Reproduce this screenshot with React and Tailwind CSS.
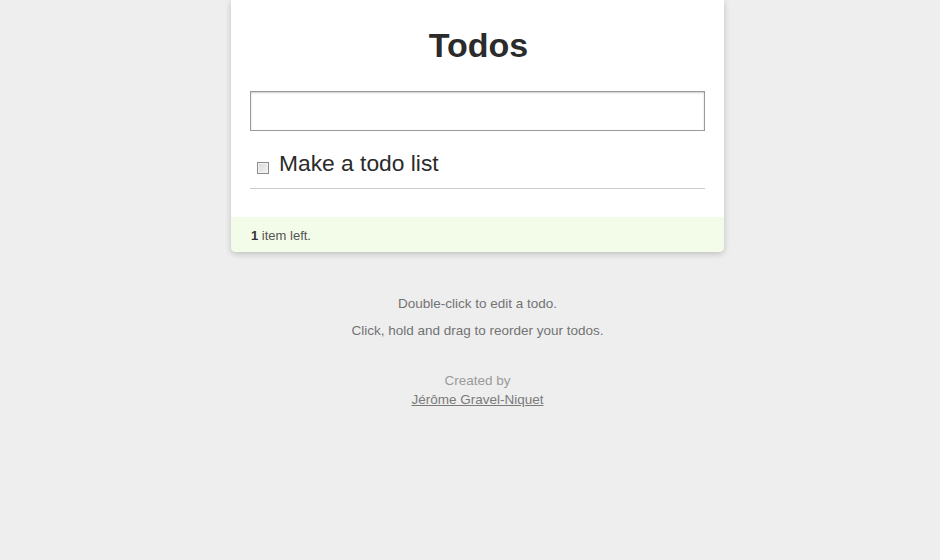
export default function App() {
  return (
    <div
      className="min-h-[560px] w-full bg-[#eeeeee] pl-[15px] text-[#333333]"
      style={{ fontFamily: '"Liberation Sans", Arial, sans-serif' }}
    >
      <div className="mx-auto w-[493px]">
        <div className="rounded-b-[5px] bg-white px-[19px] shadow-[0_2px_6px_0_rgba(0,0,0,0.2)]">
          <h1 className="pl-[2px] pt-[28px] text-center text-[34px] font-bold leading-[34px] text-[#2b2b2b]">
            Todos
          </h1>
          <input
            type="text"
            className="mt-[29px] block h-[40px] w-full border border-[#9a9a9a] bg-white px-[6px] text-[23px] shadow-[inset_0_1px_2px_rgba(0,0,0,0.2)] outline-none"
          />
          <ul className="mt-[21px]">
            <li className="flex items-start border-b border-[#cccccc] pb-[13px]">
              <span className="ml-[7px] mt-[10px] block h-[12px] w-[12px] shrink-0 border border-[#8c8c8c] bg-gradient-to-br from-[#d9d9d9] to-[#f4f4f4] shadow-[inset_0_0_0_1px_#f2f2f2]" />
              <span className="ml-[10px] text-[22.8px] leading-[23px] text-[#2b2b2b]">
                Make a todo list
              </span>
            </li>
          </ul>
          <div className="-mx-[19px] mt-[28px] h-[35px] rounded-b-[5px] bg-[#f3fbe9] px-[20px] pt-[12px] text-[13px] leading-[13px] text-[#555555]">
            <b className="text-[#333333]">1</b> item left.
          </div>
        </div>
        <div className="mt-[45px] text-center text-[13.5px] leading-[13.5px] text-[#737373]">
          <p>Double-click to edit a todo.</p>
          <p className="mt-[13px]">Click, hold and drag to reorder your todos.</p>
        </div>
        <div className="mt-[36px] text-center text-[13.5px] leading-[15.5px]">
          <p className="text-[#9a9a9a]">Created by</p>
          <a href="#" className="mt-[3px] inline-block text-[#7a7a7a] underline">
            Jérôme Gravel-Niquet
          </a>
        </div>
      </div>
    </div>
  );
}
